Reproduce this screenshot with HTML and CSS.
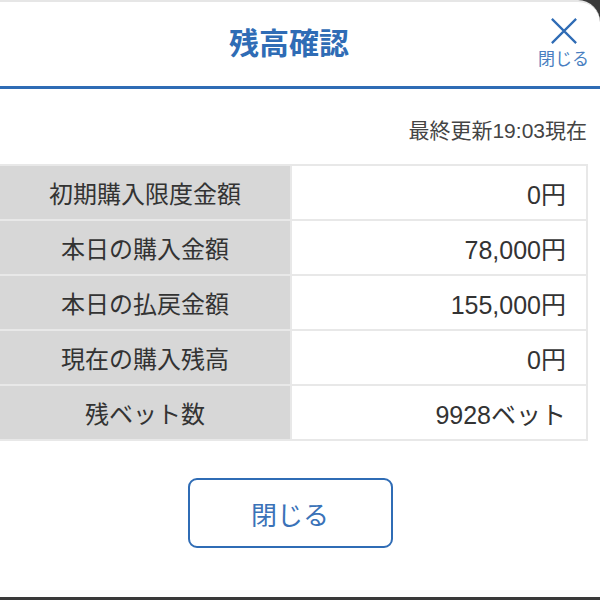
FILE: index.html
```html
<!DOCTYPE html>
<html lang="ja">
<head>
<meta charset="utf-8">
<link rel="stylesheet" href="styles.css">
</head>
<body>
<div class="modal">
  <header class="head">
    <h1 class="title">残高確認</h1>
    <div class="close">
      <svg class="x" width="30" height="30" viewBox="0 0 30 30"><path d="M2 2 L28 28 M28 2 L2 28" stroke="#2f6cb5" stroke-width="2.4" fill="none"/></svg>
      <span class="close-label">閉じる</span>
    </div>
  </header>
  <div class="updated">最終更新19:03現在</div>
  <table class="tbl">
    <tr><th>初期購入限度金額</th><td>0円</td></tr>
    <tr><th>本日の購入金額</th><td>78,000円</td></tr>
    <tr><th>本日の払戻金額</th><td>155,000円</td></tr>
    <tr><th>現在の購入残高</th><td>0円</td></tr>
    <tr><th>残ベット数</th><td>9928ベット</td></tr>
  </table>
  <div class="actions"><button class="btn">閉じる</button></div>
</div>
</body>
</html>
```
FILE: styles.css
```css
html, body { margin: 0; padding: 0; }
body {
  width: 600px; height: 600px; overflow: hidden;
  background: #3a3a3a;
  font-family: "Liberation Sans", "Noto Sans CJK JP", sans-serif;
}
.modal {
  width: 600px; height: 597px;
  background: #fff;
  border-top: 2px solid #e6e6e6;
  border-top-right-radius: 22px;
  box-sizing: border-box;
  overflow: hidden;
}
.head {
  height: 84px;
  border-bottom: 3px solid #2f6cb5;
  display: flex; align-items: center; justify-content: center;
  padding-right: 22px;
  position: relative;
}
.title {
  margin: 0; margin-top: -6px;
  font-size: 30px; font-weight: 700; color: #2f6cb5;
}
.close {
  position: absolute; right: 11px; top: 15px;
  display: flex; flex-direction: column; align-items: center;
}
.x { display: block; width: 28px; height: 28px; }
.close-label { font-size: 17px; color: #4a7fc1; line-height: 20px; margin-top: 5px; }
.updated {
  text-align: right; padding-right: 13px;
  font-size: 21px; color: #444; margin-top: 28px; line-height: 28px;
}
.tbl {
  margin-top: 19px;
  width: 588px; border-collapse: collapse;
  border: 2px solid #e8e8e8; border-left: none;
}
.tbl th, .tbl td { height: 53px; border-top: 2px solid #e8e8e8; border-bottom: 2px solid #e8e8e8; padding: 0; }
.tbl th {
  width: 290px; background: #d7d7d7; font-weight: 400;
  font-size: 24px; color: #333; text-align: center;
  border-right: 2px solid #e8e8e8;
}
.tbl td {
  text-align: right; padding-right: 20px;
  font-size: 25px; color: #333;
}
.actions { display: flex; justify-content: center; padding-top: 37px; padding-right: 20px; }
.btn {
  width: 205px; height: 70px;
  border: 2px solid #2f6cb5; border-radius: 9px;
  background: #fff; color: #3a72b8;
  font-family: inherit; font-size: 26px;
}
```
